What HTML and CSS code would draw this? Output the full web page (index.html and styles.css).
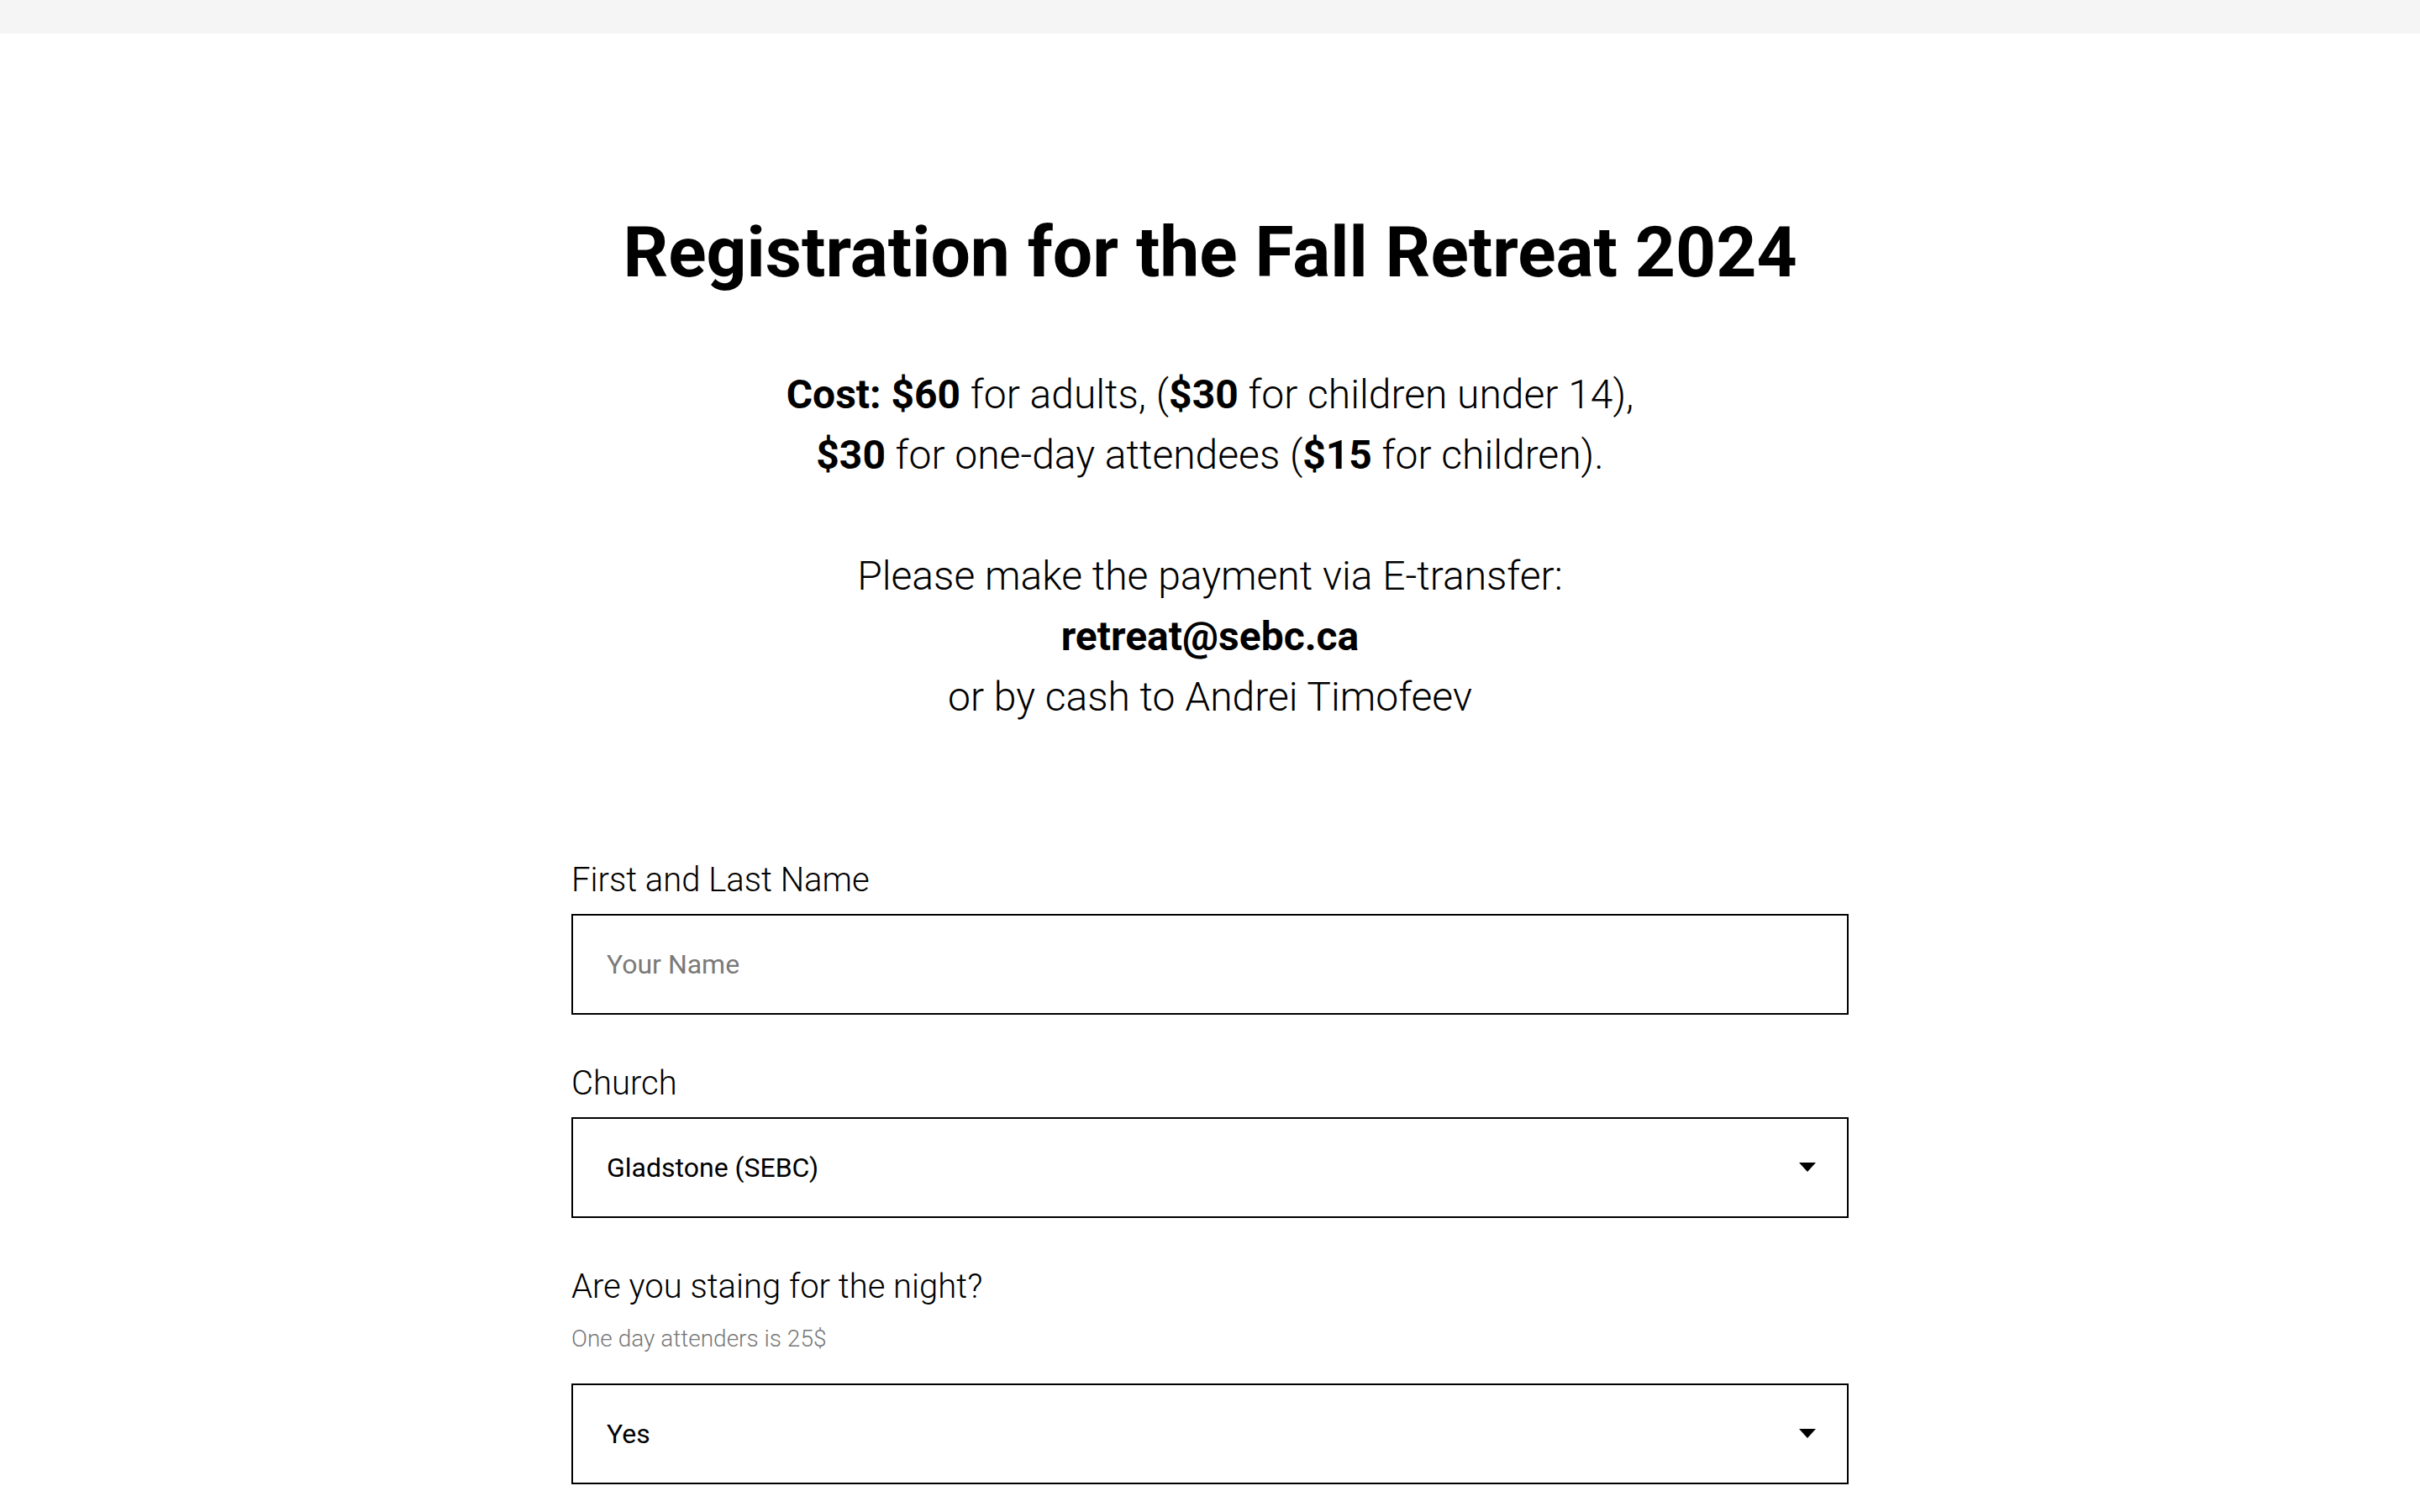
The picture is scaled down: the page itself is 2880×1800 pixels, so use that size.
FILE: index.html
```html
<!doctype html>
<html lang="en">
  <head>
    <meta charset="UTF-8" />
    <meta name="viewport" content="width=device-width, initial-scale=1.0" />
    <title>Fall Retreat 2024 Registration</title>
    <link rel="stylesheet" href="styles.css">
  </head>
  <body>
    <div class="topbar"></div>
    <div class="container">
      <div class="header">
        <h1>Registration for the Fall Retreat 2024</h1>
        <p class="descr">
          <strong>Cost: $60</strong> for adults, (<strong>$30</strong> for children under 14),<br />
          <strong>$30</strong> for one-day attendees (<strong>$15</strong> for children).<br />
          <br />
          Please make the payment via E-transfer:<br />
          <strong>retreat@sebc.ca</strong><br />
          or by cash to Andrei Timofeev
        </p>
      </div>

      <form class="form" onsubmit="return false">
        <div class="field">
          <label for="name">First and Last Name</label>
          <input type="text" id="name" placeholder="Your Name" />
        </div>
        <div class="field">
          <label for="church">Church</label>
          <div class="select-wrap">
            <select id="church">
              <option>Gladstone (SEBC)</option>
              <option>Other</option>
            </select>
          </div>
        </div>
        <div class="field">
          <label for="night">Are you staing for the night?</label>
          <div class="hint">One day attenders is 25$</div>
          <div class="select-wrap">
            <select id="night">
              <option>Yes</option>
              <option>No</option>
            </select>
          </div>
        </div>
      </form>
    </div>
  </body>
</html>
```

FILE: styles.css
```css
body {
  font-family: Roboto, "Liberation Sans", sans-serif;
  font-weight: 300;
  color: #000;
  background: #fff;
  margin: 0;
  padding: 0;
}
.topbar {
  height: 40px;
  background: #f5f5f5;
}
.container {
  width: 1520px;
  margin: 0 auto;
}
.header {
  text-align: center;
  padding-top: 209px;
}
.header h1 {
  font-size: 84px;
  font-weight: 700;
  line-height: 1.23;
  margin: 0;
}
.descr {
  font-size: 48px;
  line-height: 72px;
  margin: 82px 0 0;
}
.descr strong {
  font-weight: 700;
}
.form {
  margin-top: 158px;
}
.field {
  margin-bottom: 58px;
}
label {
  display: block;
  font-size: 40px;
  line-height: 48px;
  margin-bottom: 16px;
}
.hint {
  font-size: 28px;
  line-height: 36px;
  color: #777;
  margin-bottom: 39px;
  position: relative;
  top: 4px;
}
input[type="text"],
select {
  display: block;
  width: 100%;
  height: 120px;
  box-sizing: border-box;
  padding: 0 40px;
  border: 2px solid #000;
  border-radius: 0;
  background: #fff;
  font-family: Roboto, "Liberation Sans", sans-serif;
  font-size: 32px;
  font-weight: 400;
  color: #000;
  outline: none;
  -webkit-appearance: none;
  appearance: none;
}
input::placeholder {
  color: #7a7a7a;
}
.select-wrap {
  position: relative;
}
/* dropdown caret drawn over the select */
.select-wrap::after {
  content: "";
  position: absolute;
  right: 39px;
  top: 54px;
  border-left: 10px solid transparent;
  border-right: 10px solid transparent;
  border-top: 11px solid #000;
  pointer-events: none;
}
```
